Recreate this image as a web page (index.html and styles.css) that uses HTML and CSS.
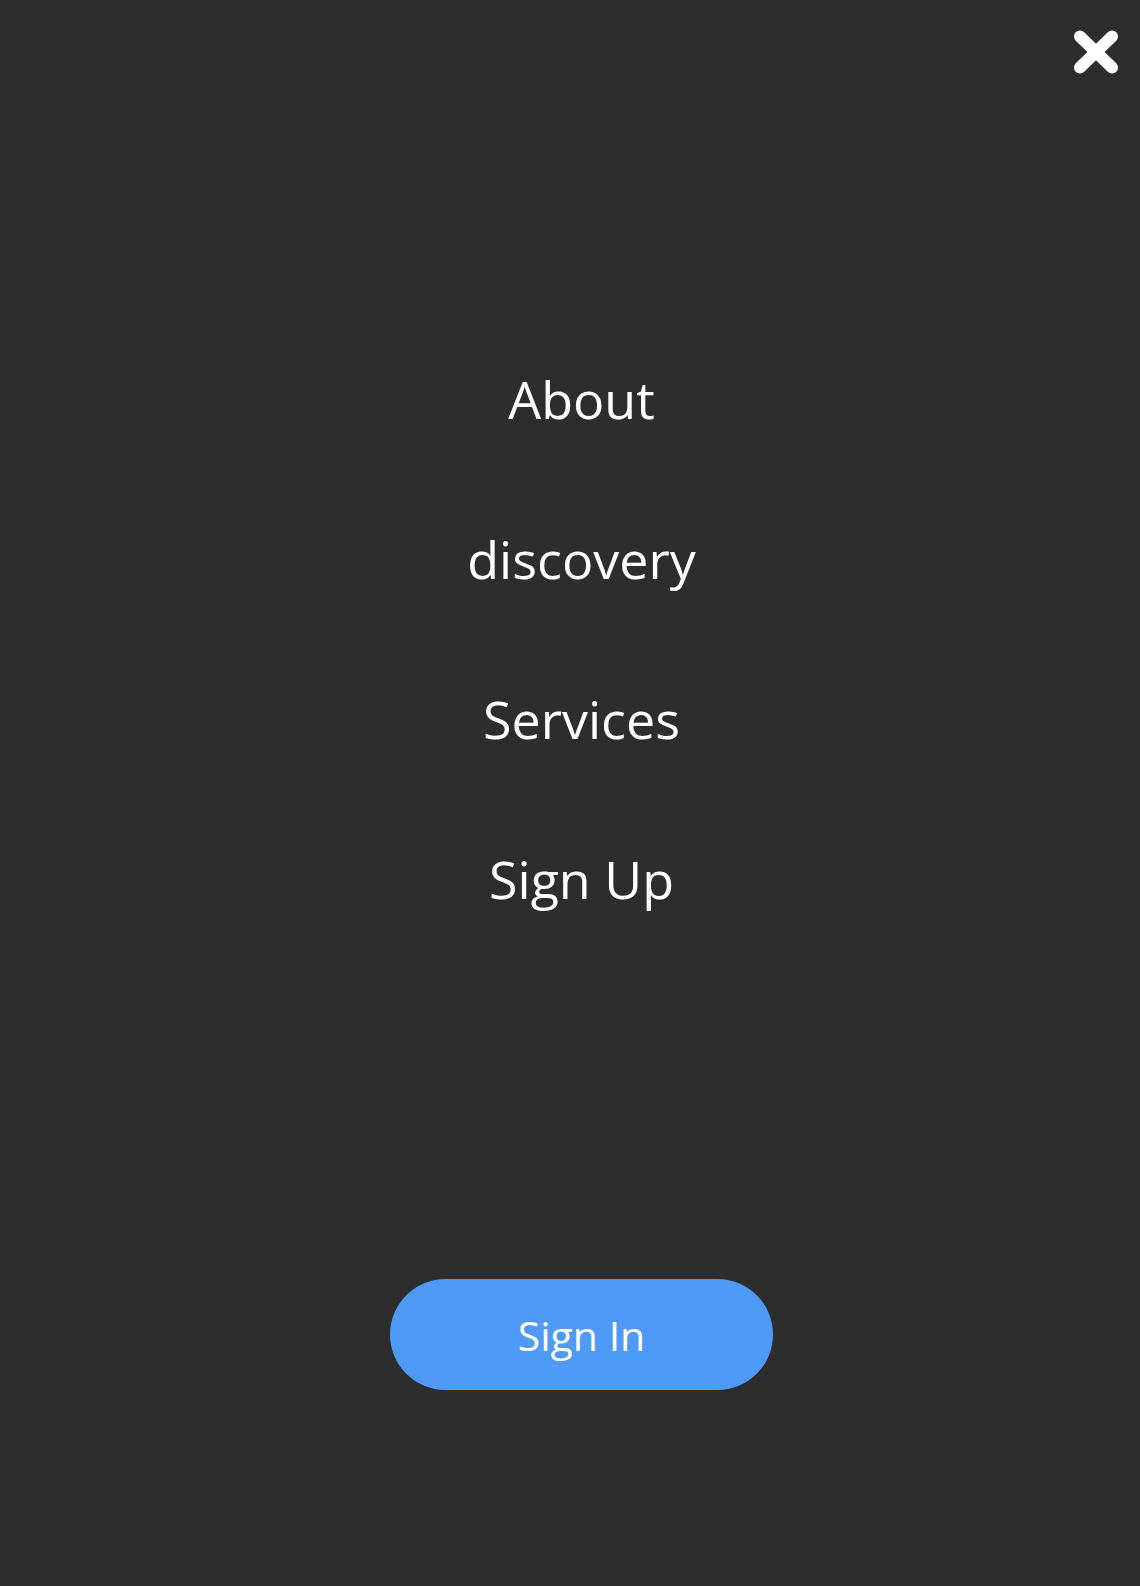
FILE: index.html
```html
<!DOCTYPE html>
<html lang="en">
<head>
<meta charset="utf-8">
<title>Menu</title>
<link rel="stylesheet" href="styles.css">
</head>
<body>
<div class="overlay">
  <button class="close" aria-label="Close">
    <svg width="46" height="44" viewBox="0 0 46 44">
      <path d="M7 6.5 L39 37.5 M39 6.5 L7 37.5" stroke="#fff" stroke-width="12" stroke-linecap="round" fill="none"/>
    </svg>
  </button>
  <nav class="menu">
    <a class="item" href="#">About</a>
    <a class="item" href="#">discovery</a>
    <a class="item" href="#">Services</a>
    <a class="item" href="#">Sign Up</a>
  </nav>
  <div class="actions">
    <a class="signin" href="#">Sign In</a>
  </div>
</div>
</body>
</html>
```
FILE: styles.css
```css
html, body {
  margin: 0;
  padding: 0;
  background: #2d2d2d;
}
body {
  font-family: "Open Sans", "Noto Sans", sans-serif;
  color: #fff;
}
.overlay {
  position: relative;
  width: 1140px;
  height: 1586px;
  display: flex;
  flex-direction: column;
  align-items: center;
  padding-left: 23px;
  box-sizing: border-box;
}
.close {
  position: absolute;
  top: 30px;
  right: 21px;
  padding: 0;
  border: 0;
  background: none;
  line-height: 0;
}
.menu {
  margin-top: 319px;
  display: flex;
  flex-direction: column;
  align-items: center;
}
.item {
  display: block;
  color: #fff;
  text-decoration: none;
  font-size: 52px;
  line-height: 160px;
  height: 160px;
}
.actions {
  margin-top: 320px;
}
.signin {
  display: flex;
  align-items: center;
  justify-content: center;
  width: 383px;
  height: 111px;
  border-radius: 56px;
  background: #4f9af7;
  color: #fff;
  text-decoration: none;
  font-size: 41px;
}
```
